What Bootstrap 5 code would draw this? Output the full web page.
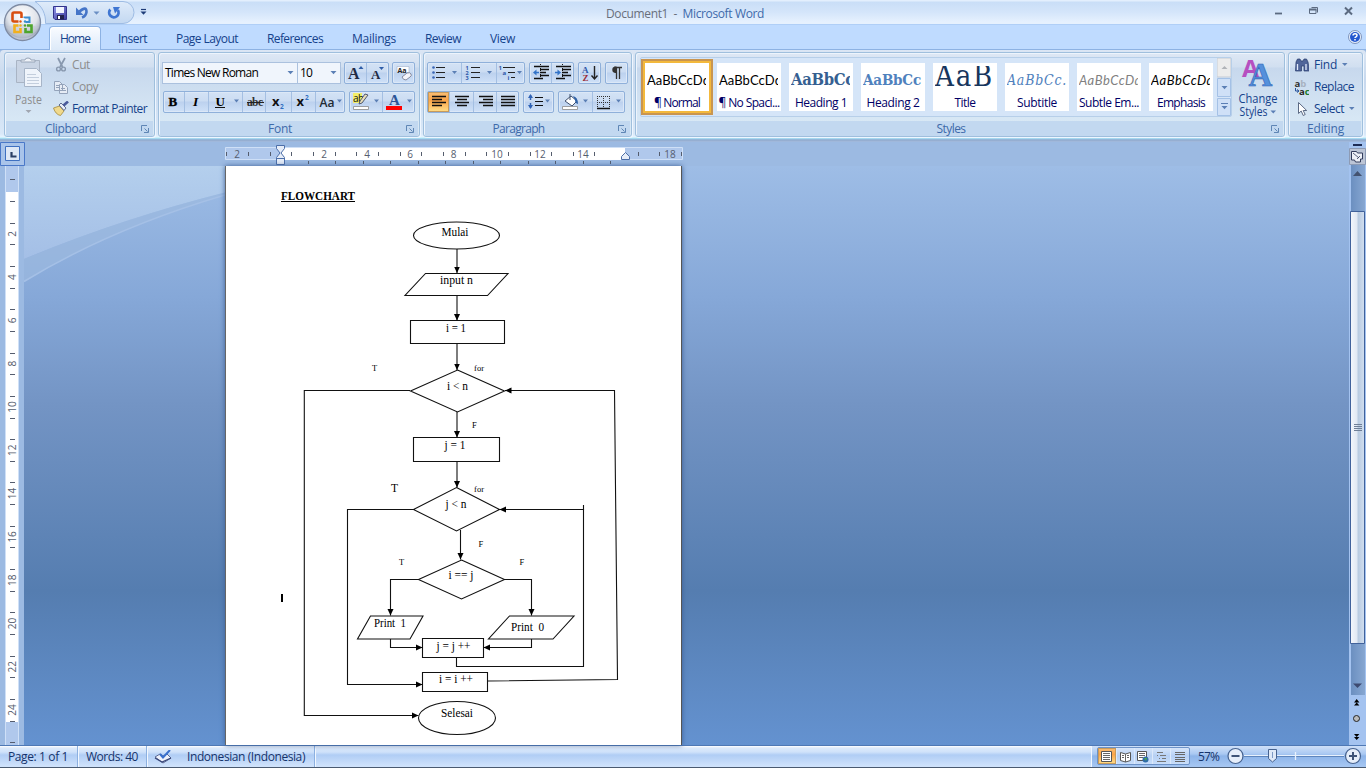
<!DOCTYPE html>
<html lang="en">
<head>
<meta charset="utf-8">
<title>Document1 - Microsoft Word</title>
<link href="https://cdn.jsdelivr.net/npm/bootstrap@5.3.0/dist/css/bootstrap.min.css" rel="stylesheet">
<script src="https://cdn.jsdelivr.net/npm/bootstrap@5.3.0/dist/js/bootstrap.bundle.min.js"></script>
<style>
html,body{height:100%}
body{font:12px/14px "Open Sans","Noto Sans",sans-serif;color:#15428b;width:1366px;height:768px;overflow:hidden;background:#9cbae2}
svg{display:block;flex:none}
.fit{white-space:nowrap;display:inline-block;flex:none}
.titlebar{height:25px;background:linear-gradient(#e3effd 0,#e3effd 1px,#c9def7 2px,#d4e5fa 12px,#e6f1fe 22px);border-bottom:1px solid #b0cff7;position:relative}
.wtitle{color:#3e6aaa;padding-left:606px;padding-top:7px}
.wtitle span span{color:#696f7b}
.orb{position:absolute;left:0;top:0;z-index:3}
.wbtns{position:absolute;right:0;top:0}
.tabrow{height:25px;background:#bfdbff;border-bottom:1px solid #8db2e3;padding-left:49px;gap:7px}
.tabrow .nav-link{padding:7px 11px 0;height:24px;color:#15428b;border:0;line-height:14px}
.tabrow .nav-link.active{background:linear-gradient(#fafcff,#eaf2fc 50%,#dce9f8);border:1px solid #8db2e3;border-bottom:0;border-radius:4px 4px 0 0;padding:5px 10px 0;height:25px;margin-top:1px;margin-bottom:-1px;color:#15428b;box-shadow:inset 1px 1px #fff}
.tabrow .early{margin-left:-1px}
.ribbon{height:92px;background:linear-gradient(#dbe6f4 0,#cfdef0 18px,#c8d9ee 30px,#d9e8f8 84px,#e6f4ff 87px,#b5eef8 88px,#96c3e6 89px,#90a9cc 90px,#a5bde0 92px);padding:2px 4px 0;border-radius:4px 4px 0 0}
.panel{border:1px solid #9fbfdd;border-radius:3px;height:85px;background:linear-gradient(#dee8f5 0,#d1dff0 14px,#c7d8ed 15px,#d8e8f5 69px);box-shadow:inset 1px 1px #edf4fc,1px 1px #eef6ff;overflow:hidden;flex:none}
.p-body{height:68px}
.p-foot{height:15px;background:#c2d8f0;color:#3e6aaa;position:relative;text-align:center;line-height:16px;margin:0 1px}
.p-foot .fit{margin-right:18px}
.p-foot .fit.mid{margin-right:0}
.p-foot svg{position:absolute;right:4px;top:4px}
.w-clip{width:151px}.w-font{width:262px;margin-left:3px}.w-para{width:209px;margin-left:3px}.w-style{width:650px;margin-left:3px}.w-edit{width:75px;margin-left:3px}
.row-a{margin-top:9px;gap:3px;padding-left:3px}
.row-b{margin-top:7px;gap:4px;padding-left:4px}
.w-para .row-a{gap:4px}
.w-para .row-b{padding-left:3px}
.combo{height:22px;border:1px solid #abc1de;background:#f0f5fc;color:#000;padding:3px 3px 0 2px}
.c-name{width:136px}.c-size{width:44px;margin-left:-4px}
.bgroup{border:1px solid #8fb0da;border-radius:2px;height:22px;background:linear-gradient(#d3e2f5 0,#cbdcf2 9px,#bcd1ee 10px,#cfe1f8 100%);box-shadow:inset 0 0 0 1px #dce8f7}
.bgroup .btn,.view .btn{padding:0;border:0;border-radius:0;line-height:0}
.bgroup .btn+.btn{border-left:1px solid #a4bfe2}
.hot{background:linear-gradient(#f9c078,#fba347 40%,#ffe08a)!important;box-shadow:inset 0 0 0 1px #c69a5c}
.cmds{padding-top:1px}
.cmd{height:22px;gap:3px}
.w-edit .cmd{gap:5px}
.w-edit .cmd .fit+svg{margin-left:0}
.dis{color:#8d8d8d}
.gallery{width:592px;height:60px;border:1px solid #b7cfe9;background:#d5e5f8;margin:4px 0 0 4px;border-radius:2px}
.tile{width:64px;height:48px;background:#fff;margin:5px 0 0 0;flex:none;overflow:hidden;text-align:center;color:#000066}
.tile.sel{margin-left:4px;outline:2px solid #f3b93c;box-shadow:0 0 0 4px #c99550}
.tiles{gap:8px}
.samp{height:29px;line-height:34px;margin:3px 3px 0 2px;overflow:hidden;white-space:nowrap;text-align:left;font-family:Lato,sans-serif;font-size:13px;line-height:28px;color:#000}
.tile .lbl{line-height:14px;margin-top:1px}
.ser{font-family:"DejaVu Serif Condensed","DejaVu Serif","Liberation Serif",serif}
.s-h1{font-size:16.5px;font-weight:bold;color:#365f91}.s-h2{font-size:15px;font-weight:bold;color:#4f81bd}.s-t{font-size:29px;color:#17365d;line-height:21px}.s-sub{font-size:14px;font-style:italic;color:#4f81bd}.s-se{font-style:italic;color:#808080}.s-em{font-style:italic}
.hr-row{height:24px;background:#9cbae2}
.canvas-area{background:linear-gradient(#9ebde6 0,#86a8d8 130px,#7394c4 240px,#557db0 425px,#6492d0 579px);position:relative;height:579px}
.vrule{width:24px}
.page{width:457px;height:579px;background:#fff;border-left:1px solid #666;border-right:1px solid #555;box-shadow:0 0 5px #3c5f95}
.swoosh{width:201px}
.sb{width:17px;background:#a4c3f0}
.status{height:23px;border-top:1px solid #4f79b5;border-bottom:1px solid #4a5a70;background:linear-gradient(#fff 0,#dceafb 2px,#d0e2fa 6px,#b0cdf5 9px,#cfe2fb 20px);color:#15336b}
.status .cell{height:21px;border-right:1px solid #8cb0e0;box-shadow:1px 0 #f1f7ff;padding-top:4px;flex:none}
.status .lang{margin-left:15px}
.c1{width:78px;padding-left:8px}.c2{width:69px;padding-left:8px}.c3{width:168px;padding-left:7px}
.st-right{width:275px;background:linear-gradient(#cfe0f8,#a9c8f2 8px,#8db4e9 10px,#a5c6f2 20px);padding-left:6px;box-shadow:inset 1px 0 #f1f7ff}
.st-right .zoom-l{margin:4px 1px 0 8px}
.view{height:18px;margin-top:1px;width:93px;border:1px solid #6c92c8;border-radius:2px;background:linear-gradient(#d6e5fa,#b6d0f4 50%,#c9defa)}
.view .btn+.btn{border-left:1px solid #dce9fb}
</style>
</head>
<body>
<div class="d-flex flex-column h-100">
<header class="titlebar flex-shrink-0">
  <div class="wtitle"><span class="fit" data-w="158"><span>Document1&nbsp; -</span>&nbsp; Microsoft Word</span></div>
  <svg class="orb" width="160" height="49" viewBox="0 0 160 49">
    <defs><radialGradient id="og" cx=".5" cy=".3" r=".75"><stop offset="0" stop-color="#fff"/><stop offset=".55" stop-color="#dfe3ea"/><stop offset=".8" stop-color="#a3adbd"/><stop offset="1" stop-color="#eef"/></radialGradient>
    <linearGradient id="qg" x2="0" y2="1"><stop offset="0" stop-color="#dfebfa"/><stop offset="1" stop-color="#c3d8f1"/></linearGradient>
    <linearGradient id="fl" x2="1" y2="1"><stop offset="0" stop-color="#9296ea"/><stop offset="1" stop-color="#3a3a9c"/></linearGradient></defs>
    <path d="M35 1.500H123a11 11 0 0 1 0 22H45.500C46 14 42 6 35 1.500Z" fill="url(#qg)" stroke="#9ebce4"/>
    <circle cx="22.500" cy="22.500" r="18" fill="url(#og)" stroke="#7e8ba3" stroke-width="1.300"/>
    <path d="M7 27Q22 21 38 27A16 14 0 0 1 7 27Z" fill="#c4cad6" opacity=".55"/>
    <g fill="none" stroke-width="2.600"><path d="M18.500 21.500h-4.500q-1.500 0-1.500-1.500v-6q0-1.500 1.500-1.500h6q1.500 0 1.500 1.500v4" stroke="#d84e10"/>
    <path d="M24.500 18v-.5h5v4.500h-4" stroke="#3b8ed0" stroke-width="2"/><path d="M18.500 25.500h-4v6.500h6v-4" stroke="#f2b01e"/><path d="M27 25.500h4.500v6.500h-6v-4" stroke="#4ea52d"/></g>
    <circle cx="20.500" cy="21.500" r="1.200" fill="#e2580f"/><circle cx="20.500" cy="25.500" r="1.200" fill="#f2b01e"/><circle cx="25" cy="21.500" r="1.200" fill="#3b8ed0"/><circle cx="25" cy="25.500" r="1.200" fill="#4ea52d"/>
    <path d="M53.500 6.500h13v13h-11.500l-1.500-1.500Z" fill="url(#fl)" stroke="#33338c"/><path d="M56 7h8v6h-8Z" fill="#f2f5ff"/><path d="M57 15h7v4.500h-7Z" fill="#22224c"/><path d="M58 16h2v3h-2Z" fill="#fff"/>
    <path d="M79.500 11.500Q86.500 5.500 86.500 12 86 16 82 17.500" fill="none" stroke="#4575c8" stroke-width="2.600"/><path d="M76 7.500v7.500h7.500Z" fill="#4575c8"/>
    <path d="M93.500 11.500h6l-3 3.200Z" fill="#6a8fc4"/>
    <path d="M110.300 9.500a4.700 4.700 0 1 0 7.500.5" fill="none" stroke="#3f76d2" stroke-width="2.800"/><path d="M113 7h7l-5 6.500Z" fill="#3f76d2"/>
    <path d="M141 9.500h5" stroke="#1e3c78" stroke-width="1.200"/><path d="M140.500 11.500h6l-3 3.200Z" fill="#1e3c78"/>
  </svg>
  <svg class="wbtns" width="106" height="25" viewBox="1260 0 106 25"><path d="M1275 13.500h7" stroke="#5b6a80" stroke-width="1.800"/><path d="M1311.500 7.500h6v5M1309.500 9.500h6.500v4h-6.500Z" fill="none" stroke="#5b6a80"/><path d="M1309 9.500h7.500" stroke="#5b6a80" stroke-width="2"/><path d="M1345 7.500l7 7M1352 7.500l-7 7" stroke="#5b6a80" stroke-width="2"/></svg>
</header>

<nav class="nav nav-tabs tabrow d-flex flex-nowrap flex-shrink-0">
  <a class="nav-link active"><span class="fit" data-w="30">Home</span></a>
  <a class="nav-link early"><span class="fit" data-w="29">Insert</span></a>
  <a class="nav-link"><span class="fit" data-w="62">Page Layout</span></a>
  <a class="nav-link"><span class="fit" data-w="56">References</span></a>
  <a class="nav-link"><span class="fit" data-w="44">Mailings</span></a>
  <a class="nav-link"><span class="fit" data-w="36">Review</span></a>
  <a class="nav-link"><span class="fit" data-w="25">View</span></a>
  <svg class="ms-auto me-0" width="18" height="24" viewBox="1348 25 18 24"><circle cx="1355" cy="37" r="6.500" fill="#e9f1fd" stroke="#7d93bb"/><circle cx="1355" cy="37" r="5" fill="#2357cf"/><path d="M1353 35.500q0-1.800 2-1.800t2 1.600q0 1-1 1.500t-1 1.200M1355 39v1.500" fill="none" stroke="#fff" stroke-width="1.500"/></svg>
</nav>

<section class="ribbon d-flex flex-shrink-0">
  <div class="panel w-clip">
    <div class="p-body d-flex">
      <svg width="48" height="68" viewBox="5 53 48 68"><path d="M16.500 60.500h23v22h-23Z" fill="#c9d4e4" stroke="#a9b4c4"/><path d="M21 62v-2h4q0-2 3-2t3 2h4v2Z" fill="#eef2f8" stroke="#98a5b8"/><path d="M24.500 68.500h12l5 5v13h-17Z" fill="#eff4fb" stroke="#a7b5c8"/><path d="M27 74.500h9M27 77.500h12M27 80.500h12M27 83.500h12" stroke="#c3cedd"/><text x="28.500" y="103.500" text-anchor="middle" font-size="12" textLength="27" fill="#8d8d8d" lengthAdjust="spacingAndGlyphs">Paste</text><path d="M25.500 110h6l-3 3Z" fill="#a0a6b0"/></svg>
      <div class="d-flex flex-column cmds">
        <div class="cmd d-flex align-items-center dis"><svg width="16" height="16" viewBox="53 57 16 16"><path d="M58 58l4.500 9M65 58l-5 9" stroke="#8898ae" stroke-width="1.700"/><circle cx="58.500" cy="69" r="1.900" fill="none" stroke="#8898ae" stroke-width="1.400"/><circle cx="63.500" cy="69" r="1.900" fill="none" stroke="#8898ae" stroke-width="1.400"/></svg><span class="fit" data-w="18">Cut</span></div>
        <div class="cmd d-flex align-items-center dis"><svg width="16" height="16" viewBox="53 79 16 16"><path d="M54.500 81.500h5l3 3v6h-8ZM59.500 84.500h5l3 3v6h-8Z" fill="#e6ecf5" stroke="#94a3ba"/><path d="M61 88.500h4M61 90.500h5M56 85.500h3M56 87.500h3" stroke="#94a3ba"/></svg><span class="fit" data-w="26">Copy</span></div>
        <div class="cmd d-flex align-items-center"><svg width="16" height="16" viewBox="53 101 16 16"><path d="M53.500 108l6-2 4.500 5-3.500 4.500q-5-1-7-7.500Z" fill="#f0d98c" stroke="#a48a3a" stroke-width=".8"/><path d="M59 105l2-2 5 5-2 2.500Z" fill="#e8ecf6" stroke="#3f4e78" stroke-width=".8"/><path d="M63.500 105.500l4.500-4" stroke="#4a5a9a" stroke-width="2.600"/></svg><span class="fit" data-w="75">Format Painter</span></div>
      </div>
    </div>
    <div class="p-foot"><span class="fit" data-w="51">Clipboard</span><svg class="lch" width="8" height="8" viewBox="0 0 8 8"><path d="M.5 6V.5H6M3.500 3.500l3 3M7.500 3v4.500H3" fill="none" stroke="#5f86b5"/></svg></div>
  </div>

  <div class="panel w-font">
    <div class="p-body d-flex flex-column">
      <div class="d-flex row-a">
        <div class="combo c-name d-flex justify-content-between"><span class="fit" data-w="93">Times New Roman</span><svg width="7" height="14"><path d="M.5 5h6l-3 3.300Z" fill="#5b7fb5"/></svg></div>
        <div class="combo c-size d-flex justify-content-between"><span class="fit" data-w="12">10</span><svg width="7" height="14"><path d="M.5 5h6l-3 3.300Z" fill="#5b7fb5"/></svg></div>
        <div class="bgroup d-flex"><button class="btn"><svg width="21" height="20" viewBox="345 63 21 20"><text x="348" y="79" font-family="Liberation Serif" font-size="16" font-weight="bold" fill="#222b44">A</text><path d="M358.500 69l2.500-3 2.500 3Z" fill="#2f5da8"/></svg></button><button class="btn"><svg width="21" height="20" viewBox="367 63 21 20"><text x="371" y="79" font-family="Liberation Serif" font-size="13" font-weight="bold" fill="#222b44">A</text><path d="M379 67l2.500 3 2.500-3Z" fill="#2f5da8"/></svg></button></div>
        <div class="bgroup d-flex"><button class="btn"><svg width="21" height="20" viewBox="393 63 21 20"><path d="M397 66.500h12v6h-12Z" fill="#fff" stroke="#9db0cc" stroke-width=".6"/><text x="397.500" y="72.500" font-size="7" font-weight="bold" fill="#222">Aa</text><path d="M402 77l5-4q3-1 4 1t-1 3l-4 3q-3 0-4-3Z" fill="#f4f4fa" stroke="#7b8094" stroke-width=".9"/></svg></button></div>
      </div>
      <div class="d-flex row-b">
        <div class="bgroup d-flex">
          <button class="btn"><svg width="20" height="20" viewBox="164 92 20 20"><text x="168.500" y="106" font-family="Liberation Serif" font-size="13" font-weight="bold" stroke="#111" stroke-width=".4">B</text></svg></button>
          <button class="btn"><svg width="23" height="20" viewBox="185 92 23 20"><text x="193" y="106" font-family="Liberation Serif" font-size="13.500" font-weight="bold" font-style="italic">I</text></svg></button>
          <button class="btn"><svg width="33" height="20" viewBox="209 92 33 20"><text x="215.500" y="105.500" font-family="Liberation Serif" font-size="13" font-weight="bold">U</text><path d="M215 107.500h10" stroke="#111"/><path d="M234 99.500h5l-2.500 3Z" fill="#5b7fb5"/></svg></button>
          <button class="btn"><svg width="22" height="20" viewBox="243 92 22 20"><text x="247" y="106" font-family="Liberation Serif" font-size="11.500" font-weight="bold" fill="#333" textLength="16">abc</text><path d="M247 102.500h17" stroke="#222"/></svg></button>
          <button class="btn"><svg width="25" height="20" viewBox="267 92 25 20"><text x="273" y="106" font-size="13" font-weight="bold" fill="#111">x</text><text x="281" y="109" font-size="6.500" font-weight="bold" fill="#2f6dc0">2</text></svg></button>
          <button class="btn"><svg width="23" height="20" viewBox="292 92 23 20"><text x="296.500" y="106" font-size="13" font-weight="bold" fill="#111">x</text><text x="305" y="100" font-size="6.500" font-weight="bold" fill="#2f6dc0">2</text></svg></button>
          <button class="btn"><svg width="28" height="20" viewBox="316 92 28 20"><text x="319.500" y="107" font-family="Open Sans" font-size="12" font-weight="600" fill="#222b33" textLength="15" lengthAdjust="spacingAndGlyphs">Aa</text><path d="M337 99.500h5l-2.500 3Z" fill="#5b7fb5"/></svg></button>
        </div>
        <div class="bgroup d-flex"><button class="btn"><svg width="32" height="20" viewBox="350 92 32 20"><path d="M353 93h9v10h-9Z" fill="#f3ef6a"/><text x="353" y="101.500" font-size="10" textLength="11" fill="#111">ab</text><path d="M368 95l-6 8-3 1 1-3 5-7Z" fill="#e8ddb8" stroke="#444d66" stroke-width=".9"/><path d="M353.500 106.500h15v3h-15Z" fill="#fff" stroke="#8a8a8a" stroke-width=".8"/><path d="M374 99.500h5l-2.500 3Z" fill="#5b7fb5"/></svg></button><button class="btn"><svg width="31" height="20" viewBox="383 92 31 20"><text x="389" y="105" font-family="Liberation Serif" font-size="15" font-weight="bold" fill="#2b5597">A</text><path d="M386 106h16v4h-16Z" fill="#f00"/><path d="M407 99.500h5l-2.500 3Z" fill="#5b7fb5"/></svg></button></div>
      </div>
    </div>
    <div class="p-foot"><span class="fit" data-w="24">Font</span><svg class="lch" width="8" height="8" viewBox="0 0 8 8"><path d="M.5 6V.5H6M3.500 3.500l3 3M7.500 3v4.500H3" fill="none" stroke="#5f86b5"/></svg></div>
  </div>

  <div class="panel w-para">
    <div class="p-body d-flex flex-column">
      <div class="d-flex row-a">
        <div class="bgroup d-flex">
          <button class="btn"><svg width="33" height="20" viewBox="428 63 33 20"><path d="M436 67.500h9M436 72.500h9M436 77.500h9" stroke="#222"/><g fill="#3a66b5"><circle cx="433.500" cy="67.500" r="1.300"/><circle cx="433.500" cy="72.500" r="1.300"/><circle cx="433.500" cy="77.500" r="1.300"/></g><path d="M452 71h5l-2.500 3Z" fill="#5b7fb5"/></svg></button>
          <button class="btn"><svg width="34" height="20" viewBox="462 63 34 20"><path d="M471 67.500h9M471 72.500h9M471 77.500h9" stroke="#222"/><g font-size="5.500" font-weight="bold" fill="#2d57a8"><text x="465.500" y="69.500">1</text><text x="465.500" y="74.500">2</text><text x="465.500" y="79.500">3</text></g><path d="M487 71h5l-2.500 3Z" fill="#5b7fb5"/></svg></button>
          <button class="btn"><svg width="27" height="20" viewBox="497 63 27 20"><path d="M503 67.500h12M508 72.500h7M511 77.500h4" stroke="#222"/><g font-size="6" font-weight="bold" fill="#2d57a8"><text x="498.500" y="69.500">1</text><text x="502.500" y="75">a</text><text x="507.500" y="80">i</text></g><path d="M517 71h5l-2.500 3Z" fill="#5b7fb5"/></svg></button>
        </div>
        <div class="bgroup d-flex">
          <button class="btn"><svg width="21" height="20" viewBox="530 63 21 20"><path d="M534 66.500h15M540 69.500h9M540 72.500h6M540 75.500h9M534 78.500h9" stroke="#111" stroke-width="1.300"/><path d="M540.500 64v16" stroke="#111" stroke-dasharray="1 1"/><path d="M539 72.500h-4" stroke="#3273c8" stroke-width="1.600"/><path d="M533 72.500l3.500-3v6Z" fill="#3273c8"/></svg></button>
          <button class="btn"><svg width="21" height="20" viewBox="552 63 21 20"><path d="M556 66.500h15M562 69.500h9M562 72.500h6M562 75.500h9M556 78.500h9" stroke="#111" stroke-width="1.300"/><path d="M562.500 64v16" stroke="#111" stroke-dasharray="1 1"/><path d="M555 72.500h4" stroke="#3273c8" stroke-width="1.600"/><path d="M561 72.500l-3.500-3v6Z" fill="#3273c8"/></svg></button>
        </div>
        <div class="bgroup d-flex"><button class="btn"><svg width="21" height="20" viewBox="578 63 21 20"><text x="581" y="72.500" font-size="9" font-weight="bold" font-family="Liberation Serif" fill="#2d57a8">A</text><text x="581.500" y="80.500" font-size="9" font-weight="bold" font-family="Liberation Serif" fill="#9b2d35">Z</text><path d="M593.500 66v12M590.500 75.500l3 3.500 3-3.500" fill="none" stroke="#222" stroke-width="1.400"/></svg></button></div>
        <div class="bgroup d-flex"><button class="btn"><svg width="21" height="20" viewBox="605 63 21 20"><path d="M615.500 67v12M618.500 67v12M613 67.500h8" stroke="#333" stroke-width="1.300"/><path d="M615.500 66.500h-1.500a3.300 3.300 0 0 0 0 6.500h1.500Z" fill="#333"/></svg></button></div>
      </div>
      <div class="d-flex row-b">
        <div class="bgroup d-flex">
          <button class="btn hot"><svg width="21" height="20" viewBox="428 92 21 20"><path d="M432 96.500h14M432 99.500h10M432 102.500h14M432 105.500h10" stroke="#111" stroke-width="1.300"/></svg></button>
          <button class="btn"><svg width="23" height="20" viewBox="450 92 23 20"><path d="M455 96.500h14M457 99.500h10M455 102.500h14M457 105.500h10" stroke="#111" stroke-width="1.300"/></svg></button>
          <button class="btn"><svg width="22" height="20" viewBox="474 92 22 20"><path d="M479 96.500h14M483 99.500h10M479 102.500h14M483 105.500h10" stroke="#111" stroke-width="1.300"/></svg></button>
          <button class="btn"><svg width="21" height="20" viewBox="497 92 21 20"><path d="M501 96.500h14M501 99.500h14M501 102.500h14M501 105.500h14" stroke="#111" stroke-width="1.300"/></svg></button>
        </div>
        <div class="bgroup d-flex"><button class="btn"><svg width="29" height="20" viewBox="524 92 29 20"><path d="M535 97.500h8M535 101.500h8M535 105.500h8" stroke="#111" stroke-width="1.200"/><path d="M530.500 95v14" stroke="#2f62b5" stroke-width="1.500" stroke-dasharray="5 3"/><path d="M528 98l2.500-4 2.500 4ZM528 105l2.500 4 2.500-4Z" fill="#2f62b5"/><path d="M545 99.500h5l-2.500 3Z" fill="#5b7fb5"/></svg></button></div>
        <div class="bgroup d-flex"><button class="btn"><svg width="33" height="20" viewBox="559 92 33 20"><path d="M565 101l6-5 6 5-5 5Z" fill="#fff" stroke="#3f506e"/><path d="M570 94v6" stroke="#3f506e"/><path d="M573 96q5 1 5 8-3-1-3-4Z" fill="#2f62a8"/><path d="M562.500 106.500h15v3h-15Z" fill="#fff" stroke="#8a8a8a" stroke-width=".8"/><path d="M583 99.500h5l-2.500 3Z" fill="#5b7fb5"/></svg></button><button class="btn"><svg width="31" height="20" viewBox="593 92 31 20"><path d="M597 96.500h13M597 102.500h13M597.500 96v13M603.500 96v13M609.500 96v13" stroke="#333" stroke-dasharray="1 1"/><path d="M597 108.500h13" stroke="#111" stroke-width="1.400"/><path d="M616 99.500h5l-2.500 3Z" fill="#5b7fb5"/></svg></button></div>
      </div>
    </div>
    <div class="p-foot"><span class="fit" data-w="52">Paragraph</span><svg class="lch" width="8" height="8" viewBox="0 0 8 8"><path d="M.5 6V.5H6M3.500 3.500l3 3M7.500 3v4.500H3" fill="none" stroke="#5f86b5"/></svg></div>
  </div>

  <div class="panel w-style">
    <div class="p-body d-flex">
      <div class="gallery d-flex">
        <div class="d-flex tiles flex-grow-1">
          <div class="tile sel"><div class="samp"><span class="fit" data-w="63">AaBbCcDd</span></div><div class="lbl"><span class="fit" data-w="46">¶ Normal</span></div></div>
          <div class="tile"><div class="samp"><span class="fit" data-w="63">AaBbCcDd</span></div><div class="lbl"><span class="fit" data-w="61">¶ No Spaci...</span></div></div>
          <div class="tile"><div class="samp ser s-h1"><span class="fit" data-w="63">AaBbCc</span></div><div class="lbl"><span class="fit" data-w="52">Heading 1</span></div></div>
          <div class="tile"><div class="samp ser s-h2"><span class="fit" data-w="58">AaBbCc</span></div><div class="lbl"><span class="fit" data-w="53">Heading 2</span></div></div>
          <div class="tile"><div class="samp ser s-t"><span class="fit" data-w="59">AaB</span></div><div class="lbl"><span class="fit" data-w="21">Title</span></div></div>
          <div class="tile"><div class="samp ser s-sub"><span class="fit" data-w="60">AaBbCc.</span></div><div class="lbl"><span class="fit" data-w="40">Subtitle</span></div></div>
          <div class="tile"><div class="samp s-se"><span class="fit" data-w="63">AaBbCcDd</span></div><div class="lbl"><span class="fit" data-w="60">Subtle Em...</span></div></div>
          <div class="tile"><div class="samp s-em"><span class="fit" data-w="63">AaBbCcDd</span></div><div class="lbl"><span class="fit" data-w="48">Emphasis</span></div></div>
        </div>
        <svg width="14" height="58" viewBox="1218 58 14 58"><path d="M1218 58h14v19h-14Z" fill="#ececec" stroke="#c4cbd5"/><path d="M1218.500 78.500h13v18h-13ZM1218.500 98.500h13v17h-13Z" fill="#cfe0f7" stroke="#a4c1e6"/><path d="M1222.500 69h6l-3-3Z" fill="#b0b3b8"/><path d="M1222.500 86h6l-3 3.300ZM1222.500 106h6l-3 3.300Z" fill="#5b7fb5"/><path d="M1222 103.500h7" stroke="#5b7fb5"/></svg>
      </div>
      <svg width="50" height="68" viewBox="1232 53 50 68"><g font-weight="bold"><text x="1242" y="77" font-size="24" fill="#b64fc0" textLength="17" lengthAdjust="spacingAndGlyphs" font-family="Open Sans">A</text><text x="1248.500" y="86" font-size="33" fill="#5590dc" stroke="#2f65b5" stroke-width=".6" font-family="Liberation Serif">A</text></g><g font-size="12" fill="#15428b"><text x="1238.500" y="102.500" textLength="39" lengthAdjust="spacingAndGlyphs">Change</text><text x="1239.500" y="115.500" textLength="28" lengthAdjust="spacingAndGlyphs">Styles</text></g><path d="M1270.500 110.500h5.500l-2.700 3Z" fill="#5b7fb5"/></svg>
    </div>
    <div class="p-foot"><span class="fit" data-w="29">Styles</span><svg class="lch" width="8" height="8" viewBox="0 0 8 8"><path d="M.5 6V.5H6M3.500 3.500l3 3M7.500 3v4.500H3" fill="none" stroke="#5f86b5"/></svg></div>
  </div>

  <div class="panel w-edit">
    <div class="p-body d-flex flex-column ps-1 cmds">
      <div class="cmd d-flex align-items-center"><svg width="16" height="16" viewBox="1293 57 16 16"><path d="M1296 62l1.500-3h2.500l1 2h2l1-2h2.500l1.500 3 1.500 9h-5.500v-5h-2.500v5h-6Z" fill="#50659a" stroke="#27396b" stroke-width=".7"/><path d="M1297.500 64v6M1306 64v6" stroke="#e1e9fa" stroke-width="1.300"/></svg><span class="fit" data-w="23">Find</span><svg width="6" height="6"><path d="M0 1h5.500l-2.700 3Z" fill="#5b7fb5"/></svg></div>
      <div class="cmd d-flex align-items-center"><svg width="16" height="18" viewBox="1293 78 16 18"><text x="1294.500" y="87" font-size="9.500" font-weight="bold" fill="#333">a<tspan fill="#a8b2c0">b</tspan></text><text x="1299" y="95" font-size="9.500" font-weight="bold" fill="#222">a<tspan fill="#1a7a2a">c</tspan></text><path d="M1295.500 88v3h3M1297 89.500l2 1.500-2 1.500" fill="none" stroke="#24509a"/></svg><span class="fit" data-w="40">Replace</span></div>
      <div class="cmd d-flex align-items-center"><svg width="16" height="16" viewBox="1293 101 16 16"><path d="M1298.500 102.500v11l2.700-2.500 2 4.500 2-1-2-4h3.500Z" fill="#fff" stroke="#5c6a84"/></svg><span class="fit" data-w="30">Select</span><svg width="6" height="6"><path d="M0 1h5.500l-2.700 3Z" fill="#5b7fb5"/></svg></div>
    </div>
    <div class="p-foot"><span class="fit mid" data-w="37">Editing</span></div>
  </div>
</section>

<main class="d-flex flex-grow-1">
  <div class="d-flex flex-column flex-grow-1">
    <svg id="hruler" width="1349" height="24" viewBox="0 142 1349 24"><path d="M0 142h1349v24H0Z" fill="#9cbae2"/>
      <path d="M.5 142.500h24v23H.5Z" fill="#a9c4ea" stroke="#4a78c8"/><path d="M5.500 146.500h14v14h-14Z" fill="#dfe8f6" stroke="#3f70c0"/><path d="M11.500 152v4.500h5" fill="none" stroke="#2b3f66" stroke-width="2.200"/>
      <path d="M225.500 147.500h457v12h-457Z" fill="#b0c8ec" stroke="#cfe0f7"/><path d="M281 148h344v12H281Z" fill="#fff"/></svg>
    <div class="canvas-area d-flex">
      <svg id="vruler" class="vrule" height="579" viewBox="0 166 24 579"><path d="M0 166h24v579H0Z" fill="#9cbae2"/><path d="M5.500 160h13v590h-13Z" fill="#b0c8ec" stroke="#cfe0f7"/><path d="M6 192h12v530H6Z" fill="#fff"/></svg>
      <svg class="swoosh" height="579" viewBox="24 166 201 579"><defs><linearGradient id="sw" x2="0" y2="1"><stop offset="0" stop-color="#b4cfed"/><stop offset="1" stop-color="#a4bfe6"/></linearGradient></defs><path d="M24 166h201v26.500Q120 219 24 259Z" fill="url(#sw)"/><path d="M24 259Q120 219 225 192.500v2Q110 229 24 282Z" fill="#9ebae0" opacity=".6"/><path d="M24 281.500Q110 229 225 195" fill="none" stroke="#a5c0e6" stroke-width="1.500"/></svg>
      <article class="page">
        <svg width="455" height="579" viewBox="226 166 455 579" font-family="Liberation Serif, serif" fill="#000">
          <defs><marker id="ah" viewBox="0 0 7 7" refX="6.500" refY="3.500" markerWidth="7" markerHeight="7" markerUnits="userSpaceOnUse" orient="auto"><path d="M0 .5l6.500 3L0 6.500Z"/></marker></defs>
          <text x="281" y="200" font-size="12" font-weight="bold" textLength="74" lengthAdjust="spacingAndGlyphs">FLOWCHART</text><path d="M281 201.500h74" stroke="#000"/>
          <g fill="none" stroke="#111" stroke-width="1.100">
            <ellipse cx="456.500" cy="235.500" rx="43" ry="13.500"/>
            <path d="M425.500 273.500h82.500l-20.500 22h-82.500Z"/>
            <path d="M410.500 320.500h94v23h-94ZM413.500 437.500h86v24h-86ZM422.500 638.500h61v19h-61ZM422.500 672.500h65v19h-65Z"/>
            <path d="M457.500 370l47 21-47 21-47-21ZM456.500 487.500l43 22-43 21.500-43-21.500ZM461.500 560l43 19.500-43 19.500-43-19.500Z"/>
            <path d="M370.500 616h52.500l-13 23h-52.500ZM509.500 616h64.500l-21 23h-64.500Z"/>
            <ellipse cx="457" cy="718" rx="38.500" ry="16.500"/>
            <g marker-end="url(#ah)"><path d="M457 249v24"/><path d="M457 296v24.500"/><path d="M457 344v26"/><path d="M457 412v25.500"/><path d="M457 462v25.500"/><path d="M460.500 530v29.500"/>
            <path d="M418 579.500h-27.500v36"/><path d="M505 579.500h26.500v36"/><path d="M390.500 639v8.500h32"/><path d="M531.500 639v8.500h-48"/>
            <path d="M410 390.500H304.300V715.500H418.500"/><path d="M413 509.500H347.500V684.500H422.500"/>
            <path d="M456.500 658v8.500h127V509.500H499.500"/><path d="M488 681l129.500-1.500L614.500 390.500H505"/></g>
            <path d="M583.500 505v5"/>
          </g>
          <g font-size="11.500">
            <text x="441.500" y="236" textLength="27" lengthAdjust="spacingAndGlyphs">Mulai</text><text x="440" y="284" textLength="33" lengthAdjust="spacingAndGlyphs">input n</text><text x="446" y="332" textLength="20" lengthAdjust="spacingAndGlyphs">i = 1</text><text x="447" y="390" textLength="21" lengthAdjust="spacingAndGlyphs">i &lt; n</text><text x="444.500" y="449" textLength="21" lengthAdjust="spacingAndGlyphs">j = 1</text><text x="445.500" y="508" textLength="21" lengthAdjust="spacingAndGlyphs">j &lt; n</text><text x="448.500" y="579" textLength="25" lengthAdjust="spacingAndGlyphs">i == j</text><text x="374" y="627" textLength="32" lengthAdjust="spacingAndGlyphs" xml:space="preserve">Print  1</text><text x="511" y="631" textLength="33" lengthAdjust="spacingAndGlyphs" xml:space="preserve">Print  0</text><text x="436.500" y="650" textLength="34" lengthAdjust="spacingAndGlyphs">j = j ++</text><text x="439" y="683" textLength="34" lengthAdjust="spacingAndGlyphs">i = i ++</text><text x="441" y="717" textLength="32" lengthAdjust="spacingAndGlyphs">Selesai</text><text x="391" y="492">T</text>
          </g>
          <g font-size="8.500"><text x="372" y="371">T</text><text x="474" y="371" textLength="10">for</text><text x="472" y="428">F</text><text x="474" y="492" textLength="10">for</text><text x="478.500" y="547">F</text><text x="399" y="565">T</text><text x="519.500" y="565">F</text></g>
          <path d="M281 594h2v8h-2Z"/>
        </svg>
      </article>
    </div>
  </div>
  <svg class="sb" height="603" viewBox="1349 142 17 603"><defs><linearGradient id="th"><stop offset="0" stop-color="#f4f7fc"/><stop offset=".45" stop-color="#e2e9f3"/><stop offset=".55" stop-color="#b9cbe1"/><stop offset="1" stop-color="#d3e0f0"/></linearGradient><linearGradient id="tr"><stop offset="0" stop-color="#6b8fc0"/><stop offset="1" stop-color="#87a7d2"/></linearGradient></defs>
    <path d="M1353 145h9" stroke="#1d2c55" stroke-width="2"/><path d="M1349.500 148.500h16v16h-16Z" fill="#bcc5d6" stroke="#8d9bb5"/><path d="M1351.500 151.500h5l1 1.500h5v6h-2v3h-5l-1-2h-3Z" fill="#eef1f8" stroke="#333d5c"/><path d="M1353 153l6 5M1357 159l3-3" stroke="#333d5c" stroke-width=".8"/>
    <path d="M1351 165h14v530h-14Z" fill="url(#tr)"/><path d="M1353 176h9l-4.500-5Z" fill="#43526f"/><path d="M1350.500 211.500h14v432h-14Z" fill="url(#th)" stroke="#41629b"/><path d="M1354 424.500h8M1354 426.500h8M1354 428.500h8M1354 430.500h8" stroke="#6f7f97"/>
    <path d="M1353 683.500h9l-4.500 4.500Z" fill="#3d4a70"/><path d="M1354 702.500l2.700-3.500 2.700 3.500ZM1354 705.500l2.700-3 2.700 3ZM1354 734l2.700 3 2.700-3ZM1354 737l2.700 3 2.700-3Z" fill="#000"/><circle cx="1356.500" cy="718.500" r="3" fill="#bbb" stroke="#222"/></svg>
</main>

<footer class="status d-flex flex-shrink-0">
  <div class="cell c1"><span class="fit" data-w="60">Page: 1 of 1</span></div>
  <div class="cell c2"><span class="fit" data-w="52">Words: 40</span></div>
  <div class="cell c3 d-flex"><svg width="18" height="16" viewBox="154 749 18 16"><path d="M155 756l5-3 3 2 4-2 4 4-8 5Z" fill="#eef1fb" stroke="#5c6a94"/><path d="M155 757l7 4 9-4" fill="none" stroke="#39477a" stroke-width="1.300"/><path d="M160 753l3 3.500 7-7.500" fill="none" stroke="#3a70cd" stroke-width="2"/></svg><span class="fit lang" data-w="118">Indonesian (Indonesia)</span></div>
  <div class="flex-grow-1"></div>
  <div class="st-right d-flex">
    <div class="view d-flex">
      <button class="btn hot"><svg width="18" height="16" viewBox="1098 748 18 16"><path d="M1101.500 751.500h10v10h-10Z" fill="#fff" stroke="#555"/><path d="M1103 753.500h7M1103 755.500h7M1103 757.500h7M1103 759.500h7" stroke="#666"/></svg></button>
      <button class="btn"><svg width="17" height="16" viewBox="1116 748 17 16"><path d="M1119.500 752.500l5 1.500 5-1.500v8l-5 1.500-5-1.500Z" fill="#fff" stroke="#555"/><path d="M1124.500 754v8M1121 755.500h2M1121 757.500h2M1126 755.500h2M1126 757.500h2" stroke="#666"/></svg></button>
      <button class="btn"><svg width="17" height="16" viewBox="1134 748 17 16"><path d="M1136.500 751.500h9v9h-9Z" fill="#fff" stroke="#555"/><path d="M1138 753.500h6M1138 755.500h6M1138 757.500h4" stroke="#666"/><circle cx="1144.500" cy="759.500" r="3" fill="#2f6ca8"/><path d="M1143 758h3l-1 3Z" fill="#4aa850"/></svg></button>
      <button class="btn"><svg width="17" height="16" viewBox="1152 748 17 16"><path d="M1156 752.500h6M1159 755.500h6M1161 758.500h4M1156 761.500h9M1156 755.500h1M1158 758.500h1" stroke="#777"/></svg></button>
      <button class="btn"><svg width="18" height="16" viewBox="1170 748 18 16"><path d="M1174 752.500h10M1174 754.500h10M1174 757.500h10M1174 759.500h10M1174 761.500h10" stroke="#666"/></svg></button>
    </div>
    <span class="fit zoom-l" data-w="21">57%</span>
    <svg width="146" height="21" viewBox="1220 746 146 21"><path d="M1244 756.500h100" stroke="#5f86bd"/><path d="M1244 755.500h100" stroke="#e8f1fd"/><path d="M1295.500 752v8" stroke="#e8f1fd" stroke-width="1.300"/><circle cx="1235.500" cy="756" r="7.500" fill="#e6eefa" stroke="#46628f" stroke-width="1.200"/><circle cx="1353" cy="756" r="7.500" fill="#e6eefa" stroke="#46628f" stroke-width="1.200"/><path d="M1231.500 756h8M1349 756h8M1353 752v8" stroke="#3f5478" stroke-width="2"/><path d="M1268.500 749.500h8v9l-4 3.500-4-3.500Z" fill="#dfe9f8" stroke="#46628f"/><path d="M1272.500 752v6" stroke="#7d9ac5"/></svg>
  </div>
</footer>
</div>
<script>
// Letter-spacing of each label from its design width.
document.querySelectorAll('.fit').forEach(function(e){
  var n=e.textContent.length, w=e.getBoundingClientRect().width;
  e.style.letterSpacing=((+e.dataset.w-w)/n)+'px';
});
// Ruler ticks and numbers.
var NS='http://www.w3.org/2000/svg';
function add(p,t,a,s){var e=document.createElementNS(NS,t);for(var k in a)e.setAttribute(k,a[k]);if(s!==undefined)e.textContent=s;p.appendChild(e)}
var h=document.getElementById('hruler'),v=document.getElementById('vruler'),d='',i;
for(i=0;i<22;i++){if(i==18)continue;var x=Math.round(226.400+21.65*i);d+='M'+(x+.5)+' 152v4'}
for(i=0;i<12;i++)d+='M'+(Math.round(308+27.450*i)+.5)+' 161v3';
add(h,'path',{d:d,stroke:'#555d6e'});
[[237,2],[324,2],[367,4],[410,6],[453.5,8],[497,10],[540,12],[583,14],[670,18]].forEach(function(n){add(h,'text',{x:n[0],y:157.500,'font-size':10,'text-anchor':'middle',fill:'#555d6e'},n[1])});
add(h,'path',{d:'M276.500 145.500h8v3l-3.500 4.500 3.500 4.500v7h-8v-7l3.500-4.500-3.500-4.500ZM276.500 158.500h8',fill:'#e6edf8',stroke:'#4c6ea8'});
add(h,'path',{d:'M621.500 159.500v-3l4-4 4 4v3Z',fill:'#e6edf8',stroke:'#4c6ea8'});
d='';for(i=-1;i<26;i++)d+='M10 '+(Math.round(201+21.650*i)+.5)+'h5';
add(v,'path',{d:d,stroke:'#555d6e'});
for(i=1;i<13;i++){var y=190.500+43.300*i;add(v,'text',{x:16,y:y,'font-size':10,'text-anchor':'middle',fill:'#555d6e',transform:'rotate(-90 16 '+y+')'},2*i)}
</script>
</body>
</html>
